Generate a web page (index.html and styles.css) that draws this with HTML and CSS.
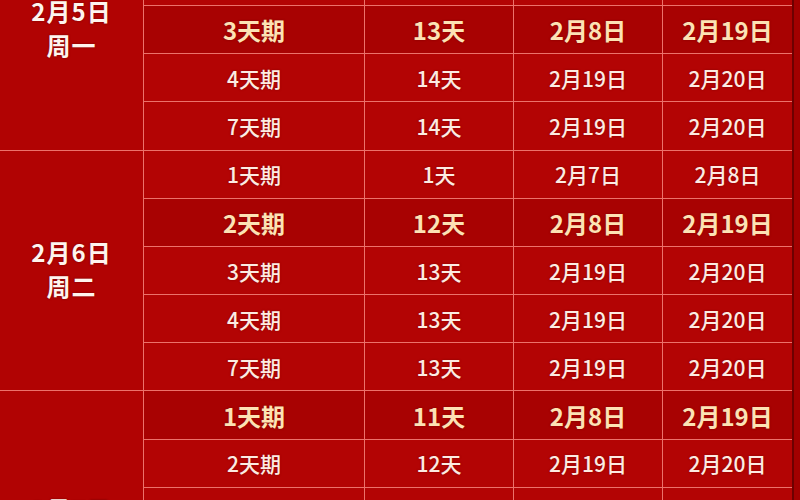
FILE: index.html
```html
<!DOCTYPE html>
<html lang="zh-CN">
<head>
<meta charset="utf-8">
<link rel="stylesheet" href="styles.css">
</head>
<body>
<div class="page">
  <div class="sheet">
    <div class="grid">
      <div class="date">2月5日<br>周一</div>
      <div class="c">1天期</div><div class="c">2天</div><div class="c">2月6日</div><div class="c">2月7日</div>
      <div class="c">2天期</div><div class="c">2天</div><div class="c">2月7日</div><div class="c">2月8日</div>
      <div class="c hi">3天期</div><div class="c hi">13天</div><div class="c hi">2月8日</div><div class="c hi">2月19日</div>
      <div class="c">4天期</div><div class="c">14天</div><div class="c">2月19日</div><div class="c">2月20日</div>
      <div class="c">7天期</div><div class="c">14天</div><div class="c">2月19日</div><div class="c">2月20日</div>

      <div class="date">2月6日<br>周二</div>
      <div class="c">1天期</div><div class="c">1天</div><div class="c">2月7日</div><div class="c">2月8日</div>
      <div class="c hi">2天期</div><div class="c hi">12天</div><div class="c hi">2月8日</div><div class="c hi">2月19日</div>
      <div class="c">3天期</div><div class="c">13天</div><div class="c">2月19日</div><div class="c">2月20日</div>
      <div class="c">4天期</div><div class="c">13天</div><div class="c">2月19日</div><div class="c">2月20日</div>
      <div class="c">7天期</div><div class="c">13天</div><div class="c">2月19日</div><div class="c">2月20日</div>

      <div class="date late">2月7日<br>周三</div>
      <div class="c hi">1天期</div><div class="c hi">11天</div><div class="c hi">2月8日</div><div class="c hi">2月19日</div>
      <div class="c">2天期</div><div class="c">12天</div><div class="c">2月19日</div><div class="c">2月20日</div>
      <div class="c">3天期</div><div class="c">12天</div><div class="c">2月19日</div><div class="c">2月20日</div>
      <div class="c">4天期</div><div class="c">12天</div><div class="c">2月19日</div><div class="c">2月20日</div>
      <div class="c">7天期</div><div class="c">12天</div><div class="c">2月19日</div><div class="c">2月20日</div>
    </div>
  </div>
  <div class="edge"></div>
</div>
</body>
</html>
```

FILE: styles.css
```css
html, body {
  margin: 0;
  padding: 0;
  width: 800px;
  height: 500px;
  overflow: hidden;
  background: #9c0000;
}

.page {
  display: flex;
  width: 800px;
  height: 500px;
  overflow: hidden;
}

.sheet {
  width: 792px;
  flex: none;
  margin-top: -91.4px;
}

.grid {
  display: grid;
  grid-template-columns: 143px 220px 148px 148px 129px;
  grid-auto-rows: 47.2px;
  gap: 1px;
  background: #ec726b;
  border-top: 1px solid #ec726b;
  font-family: "Noto Sans CJK SC", "Noto Sans", sans-serif;
}

.c {
  display: flex;
  align-items: center;
  justify-content: center;
  background: #b30404;
  color: #fdebe2;
  font-size: 21px;
  font-weight: 500;
  text-shadow: 0 0 2px rgba(90, 0, 0, 0.6);
}

.c.hi {
  background: #a80202;
  color: #fde2b4;
  font-size: 24px;
  font-weight: 700;
}

.date {
  grid-row: span 5;
  display: flex;
  align-items: center;
  justify-content: center;
  text-align: center;
  background: #b10303;
  color: #fff4ee;
  font-size: 24px;
  font-weight: 700;
  line-height: 34px;
  letter-spacing: 1px;
  padding-bottom: 3px;
  box-sizing: border-box;
  text-shadow: 0 0 2px rgba(80, 0, 0, 0.7);
}

.date.late {
  padding-top: 30px;
  padding-bottom: 0;
}

.edge {
  flex: 1;
  border-left: 2px solid #6e0000;
  background: #a20000;
}
```
